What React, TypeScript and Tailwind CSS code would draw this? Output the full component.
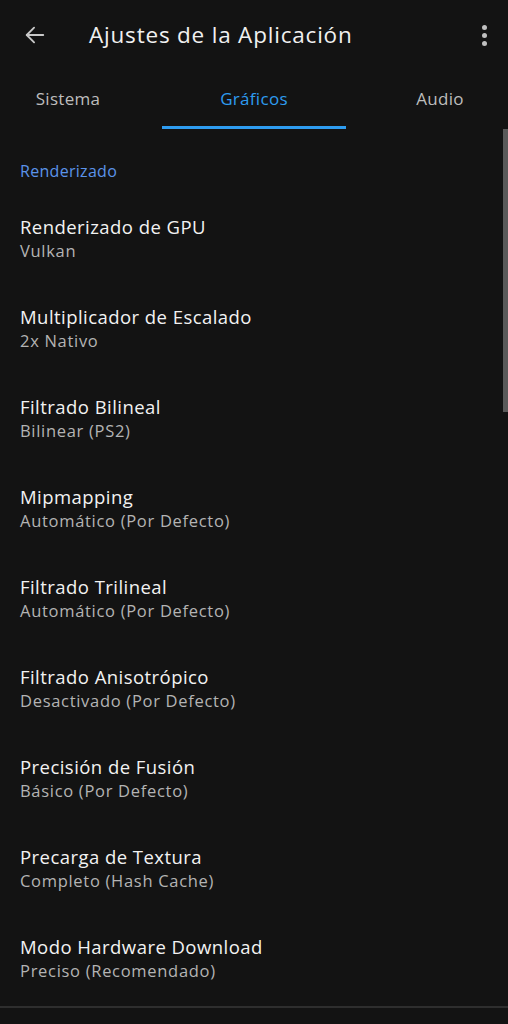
import React from "react";

const items = [
  { title: "Renderizado de GPU", value: "Vulkan" },
  { title: "Multiplicador de Escalado", value: "2x Nativo" },
  { title: "Filtrado Bilineal", value: "Bilinear (PS2)" },
  { title: "Mipmapping", value: "Automático (Por Defecto)" },
  { title: "Filtrado Trilineal", value: "Automático (Por Defecto)" },
  { title: "Filtrado Anisotrópico", value: "Desactivado (Por Defecto)" },
  { title: "Precisión de Fusión", value: "Básico (Por Defecto)" },
  { title: "Precarga de Textura", value: "Completo (Hash Cache)" },
  { title: "Modo Hardware Download", value: "Preciso (Recomendado)" },
];

export default function App() {
  return (
    <div
      className="w-[508px] h-[1024px] bg-[#131313] text-white overflow-hidden relative"
      style={{ fontFamily: "'Open Sans', sans-serif" }}
    >
      {/* Barra superior */}
      <div className="h-[70px] flex items-center">
        <button className="w-[70px] h-[70px] flex items-center justify-center text-[#c8c8c8]">
          <svg width="22" height="22" viewBox="0 0 24 24" fill="none" stroke="currentColor" strokeWidth="2" strokeLinecap="round" strokeLinejoin="round">
            <path d="M21 12H3" />
            <path d="M11 4l-8 8 8 8" />
          </svg>
        </button>
        <h1 className="ml-[19px] text-[22.5px] tracking-[0.8px] text-[#f0f0f0] flex-1 -mt-[1px]">Ajustes de la Aplicación</h1>
        <div className="w-[56px] flex flex-col items-center gap-[3px] pl-[8px]">
          <span className="w-[5px] h-[5px] rounded-full bg-[#c0c0c0]" />
          <span className="w-[5px] h-[5px] rounded-full bg-[#c0c0c0]" />
          <span className="w-[5px] h-[5px] rounded-full bg-[#c0c0c0]" />
        </div>
      </div>

      {/* Pestañas */}
      <div className="h-[59px] flex -ml-[25px] w-[558px]">
        <div className="w-[186px] flex items-center justify-center text-[17px] tracking-[0.3px] text-[#bdbdbd] pb-[1px]">Sistema</div>
        <div className="w-[186px] flex flex-col">
          <div className="flex-1 flex items-center justify-center text-[17px] tracking-[0.3px] text-[#2e9cf0] pt-[2px]">Gráficos</div>
          <div className="h-[3px] mx-[1px] bg-[#2e9cf0]" />
        </div>
        <div className="w-[186px] flex items-center justify-center text-[17px] tracking-[0.3px] text-[#bdbdbd] pb-[1px]">Audio</div>
      </div>

      {/* Lista */}
      <div className="pt-[32px]">
        <div className="px-[20px] text-[16px] tracking-[0.3px] text-[#5b93ea] leading-[20px]">Renderizado</div>
        <div className="mt-[34px]">
          {items.map((it) => (
            <div key={it.title} className="px-[20px] h-[90px]">
              <div className="text-[18.5px] tracking-[0.45px] leading-[23px] text-[#f2f2f2]">{it.title}</div>
              <div className="text-[16.5px] tracking-[0.7px] leading-[26px] text-[#b4b4b4]">{it.value}</div>
            </div>
          ))}
        </div>
      </div>

      <div className="absolute left-0 right-0 top-[1006px] h-[2px] bg-[#2e2e2e]" />
      <div className="absolute right-0 top-[129px] w-[5px] h-[283px] bg-[#5a5a5a]" />
    </div>
  );
}
